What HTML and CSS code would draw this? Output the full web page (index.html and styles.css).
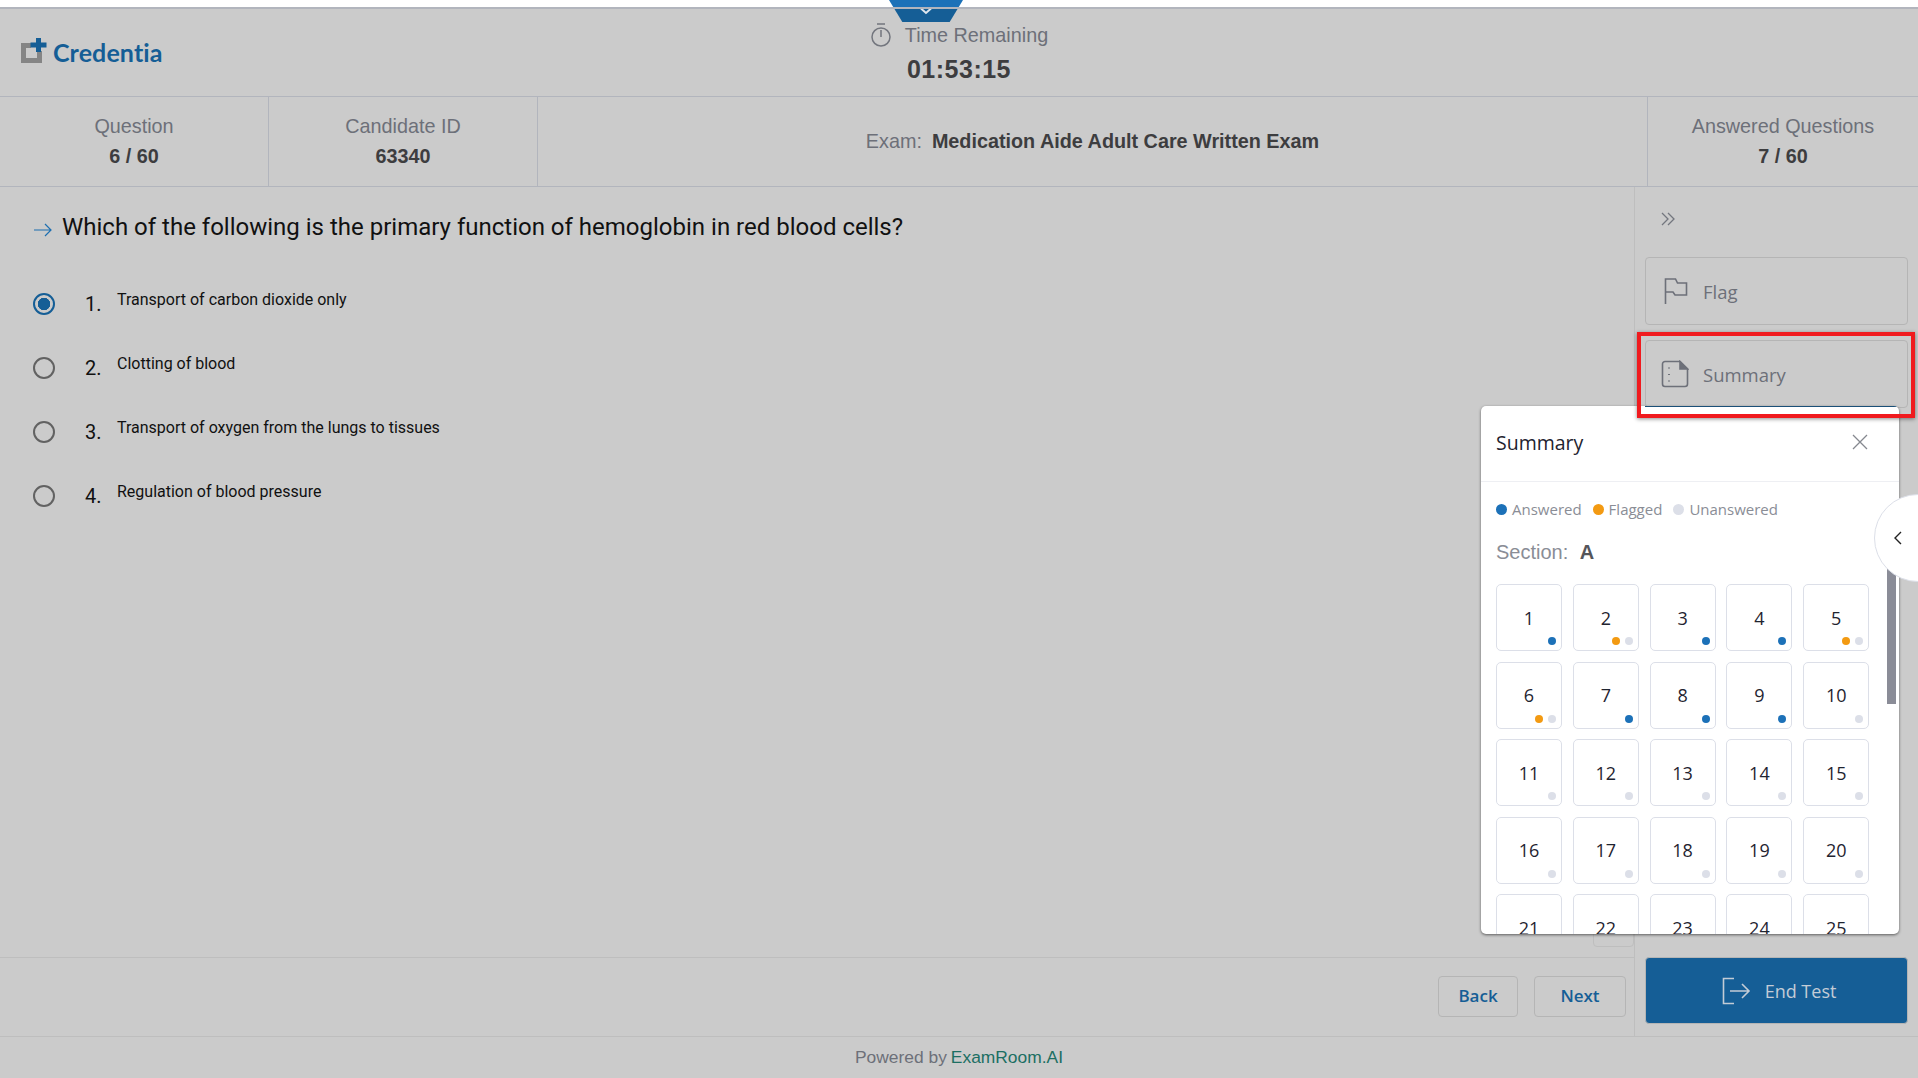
FILE: index.html
```html
<!DOCTYPE html>
<html lang="en">
<head>
  <meta charset="UTF-8" />
  <title>Exam - Credentia</title>
  <link rel="stylesheet" href="styles.css">
</head>
<body>
  <div class="top-strip"></div>
  <div class="drop-tab">
    <svg width="14" height="8" viewBox="0 0 14 8"><path d="M2 1.500 7 6l5-4.500" fill="none" stroke="#dfe6ee" stroke-width="2"/></svg>
  </div>

  <header class="topbar">
    <div class="brand">
      <svg class="brand-mark" width="28" height="27" viewBox="0 0 28 27">
        <path d="M2 5h10v5H7v10h11v-7h5v12H2z" fill="#858585"/>
        <path d="M17 0h5v4.500h5.500v5H22V14h-5V9.500h-5.500v-5H17z" fill="#155e96"/>
      </svg>
      <span class="brand-name">Credentia</span>
    </div>
    <div class="timer">
      <div class="timer-label">
        <svg width="22" height="26" viewBox="0 0 22 26" fill="none" stroke="#73767e" stroke-width="1.500">
          <path d="M7 2h8M11 8v7"/>
          <circle cx="11" cy="15" r="9"/>
        </svg>
        <span>Time Remaining</span>
      </div>
      <div class="timer-value">01:53:15</div>
    </div>
  </header>

  <section class="info-row">
    <div class="info-cell cell-question">
      <span class="info-label">Question</span>
      <strong>6 / 60</strong>
    </div>
    <div class="info-cell cell-candidate">
      <span class="info-label">Candidate ID</span>
      <strong>63340</strong>
    </div>
    <div class="info-exam">
      <span class="info-label">Exam:</span>
      <strong>Medication Aide Adult Care Written Exam</strong>
    </div>
    <div class="info-cell cell-answered">
      <span class="info-label">Answered Questions</span>
      <strong>7 / 60</strong>
    </div>
  </section>

  <div class="workspace">
    <main class="question-pane">
      <div class="question-body">
        <h1 class="question-title">
          <svg width="20" height="14" viewBox="0 0 20 14" fill="none" stroke="#1d6fb0" stroke-width="1.200"><path d="M1 7h17M12 1l6 6-6 6"/></svg>
          <span>Which of the following is the primary function of hemoglobin in red blood cells?</span>
        </h1>
        <div class="option">
          <span class="radio radio-on"></span>
          <span class="option-num">1.</span>
          <span class="option-text">Transport of carbon dioxide only</span>
        </div>
        <div class="option">
          <span class="radio"></span>
          <span class="option-num">2.</span>
          <span class="option-text">Clotting of blood</span>
        </div>
        <div class="option">
          <span class="radio"></span>
          <span class="option-num">3.</span>
          <span class="option-text">Transport of oxygen from the lungs to tissues</span>
        </div>
        <div class="option">
          <span class="radio"></span>
          <span class="option-num">4.</span>
          <span class="option-text">Regulation of blood pressure</span>
        </div>
      </div>
      <div class="nav-row">
        <button class="nav-btn btn-back">Back</button>
        <button class="nav-btn btn-next">Next</button>
      </div>
    </main>

    <aside class="side-pane">
      <svg class="side-toggle" width="16" height="14" viewBox="0 0 16 14" fill="none" stroke="#73767e" stroke-width="1.300"><path d="M2 1l6 6-6 6M8 1l6 6-6 6"/></svg>
      <button class="side-btn btn-flag">
        <svg width="24" height="28" viewBox="0 0 24 28" fill="none" stroke="#6d7079" stroke-width="1.600"><path d="M1.500 27V2h10l2 4h9v12H11l-2-3H1.500"/></svg>
        <span>Flag</span>
      </button>
      <button class="side-btn btn-summary">
        <svg width="28" height="28" viewBox="0 0 28 28" fill="none" stroke="#6d7079" stroke-width="1.600">
          <path d="M4 1.500h15l7.500 7.500v15a2.500 2.500 0 0 1-2.500 2.500H4A2.500 2.500 0 0 1 1.500 24V4A2.500 2.500 0 0 1 4 1.500z"/>
          <path d="M19 1.500l7.500 7.500H19z" fill="#6d7079"/>
          <path d="M8 7.500v1M8 14v1M8 20.500v1" stroke-width="2"/>
        </svg>
        <span>Summary</span>
      </button>
      <div class="side-spacer"></div>
      <button class="end-btn">
        <svg width="30" height="28" viewBox="0 0 30 28" fill="none" stroke="#c3ccd6" stroke-width="1.600"><path d="M13 1.500H2.500v25H13M9 14h19M21 7l7 7-7 7"/></svg>
        <span>End Test</span>
      </button>
    </aside>
  </div>

  <footer class="page-footer">Powered by <a class="footer-link">ExamRoom.AI</a></footer>

  <div class="hidden-tab"></div>

  <section class="summary-panel">
    <div class="panel-head">
      <span class="panel-title">Summary</span>
      <svg width="16" height="16" viewBox="0 0 16 16" fill="none" stroke="#85888f" stroke-width="1.300"><path d="M1 1l14 14M15 1 1 15"/></svg>
    </div>
    <div class="panel-body">
      <div class="legend">
        <span class="legend-item"><i class="dot dot-answered"></i>Answered</span>
        <span class="legend-item"><i class="dot dot-flagged"></i>Flagged</span>
        <span class="legend-item"><i class="dot dot-open"></i>Unanswered</span>
      </div>
      <div class="section-name"><span>Section:</span> <strong>A</strong></div>
      <div class="tile-grid">
        <div class="tile">1<div class="tile-dots"><i class="dot dot-answered"></i></div></div>
        <div class="tile">2<div class="tile-dots"><i class="dot dot-flagged"></i><i class="dot dot-open"></i></div></div>
        <div class="tile">3<div class="tile-dots"><i class="dot dot-answered"></i></div></div>
        <div class="tile">4<div class="tile-dots"><i class="dot dot-answered"></i></div></div>
        <div class="tile">5<div class="tile-dots"><i class="dot dot-flagged"></i><i class="dot dot-open"></i></div></div>
        <div class="tile">6<div class="tile-dots"><i class="dot dot-flagged"></i><i class="dot dot-open"></i></div></div>
        <div class="tile">7<div class="tile-dots"><i class="dot dot-answered"></i></div></div>
        <div class="tile">8<div class="tile-dots"><i class="dot dot-answered"></i></div></div>
        <div class="tile">9<div class="tile-dots"><i class="dot dot-answered"></i></div></div>
        <div class="tile">10<div class="tile-dots"><i class="dot dot-open"></i></div></div>
        <div class="tile">11<div class="tile-dots"><i class="dot dot-open"></i></div></div>
        <div class="tile">12<div class="tile-dots"><i class="dot dot-open"></i></div></div>
        <div class="tile">13<div class="tile-dots"><i class="dot dot-open"></i></div></div>
        <div class="tile">14<div class="tile-dots"><i class="dot dot-open"></i></div></div>
        <div class="tile">15<div class="tile-dots"><i class="dot dot-open"></i></div></div>
        <div class="tile">16<div class="tile-dots"><i class="dot dot-open"></i></div></div>
        <div class="tile">17<div class="tile-dots"><i class="dot dot-open"></i></div></div>
        <div class="tile">18<div class="tile-dots"><i class="dot dot-open"></i></div></div>
        <div class="tile">19<div class="tile-dots"><i class="dot dot-open"></i></div></div>
        <div class="tile">20<div class="tile-dots"><i class="dot dot-open"></i></div></div>
        <div class="tile">21<div class="tile-dots"><i class="dot dot-open"></i></div></div>
        <div class="tile">22<div class="tile-dots"><i class="dot dot-open"></i></div></div>
        <div class="tile">23<div class="tile-dots"><i class="dot dot-open"></i></div></div>
        <div class="tile">24<div class="tile-dots"><i class="dot dot-open"></i></div></div>
        <div class="tile">25<div class="tile-dots"><i class="dot dot-open"></i></div></div>
      </div>
      <div class="panel-scroll"></div>
    </div>
  </section>

  <div class="round-handle">
    <svg width="9" height="14" viewBox="0 0 9 14" fill="none" stroke="#222" stroke-width="1.400"><path d="M8 1 2 7l6 6"/></svg>
  </div>

  <div class="callout"></div>
</body>
</html>
```

FILE: styles.css
```css
* {
  box-sizing: border-box;
}
html, body {
  height: 1078px;
}
body {
  margin: 0;
  position: relative;
  overflow: hidden;
  display: flex;
  flex-direction: column;
  background-color: #cbcbcb;
  font-family: "Liberation Sans", Arial, sans-serif;
  color: #3d3d3f;
}
button {
  font-family: inherit;
  background: none;
  cursor: pointer;
}
.top-strip {
  height: 7px;
  flex: none;
  background-color: #ffffff;
}
.drop-tab {
  position: absolute;
  top: 0;
  left: 889px;
  width: 74px;
  height: 22px;
  padding-top: 7px;
  display: flex;
  justify-content: center;
  background: linear-gradient(#1c71b8 7px, #155e96 7px);
  clip-path: polygon(0 0, 100% 0, 82% 100%, 18% 100%);
}

/* header */
.topbar {
  height: 90px;
  flex: none;
  position: relative;
  display: flex;
  justify-content: center;
  border-top: 2px solid #b2b5bd;
  border-bottom: 1px solid #b2b5bd;
}
.brand {
  position: absolute;
  left: 19px;
  top: 28px;
  display: flex;
  align-items: center;
  gap: 6px;
}
.brand-mark {
  margin-top: -2px;
}
.brand-name {
  font-family: Lato, sans-serif;
  font-size: 25px;
  font-weight: 700;
  letter-spacing: 0.1px;
  color: #155e96;
}
.timer {
  padding-top: 13px;
  text-align: center;
}
.timer-label {
  display: flex;
  align-items: center;
  gap: 13px;
  font-size: 19.800px;
  color: #6d7079;
}
.timer-value {
  margin-top: 7px;
  font-size: 25px;
  font-weight: 700;
  letter-spacing: 0.5px;
  color: #3d3d3f;
}

/* info row */
.info-row {
  height: 90px;
  flex: none;
  display: flex;
  border-bottom: 1px solid #b2b5bd;
}
.info-cell {
  display: flex;
  flex-direction: column;
  align-items: center;
  justify-content: center;
  gap: 7px;
  font-size: 19.800px;
}
.cell-question {
  width: 269px;
  border-right: 1px solid #b2b5bd;
}
.cell-candidate {
  width: 269px;
  border-right: 1px solid #b2b5bd;
}
.cell-answered {
  width: 271px;
  border-left: 1px solid #b2b5bd;
}
.info-label {
  color: #6d7079;
}
.info-exam {
  flex: 1;
  display: flex;
  align-items: center;
  justify-content: center;
  gap: 10px;
  font-size: 19.800px;
}

/* question */
.workspace {
  height: 849px;
  flex: none;
  display: flex;
}
.question-pane {
  width: 1634px;
  display: flex;
  flex-direction: column;
}
.question-body {
  flex: 1;
  padding: 23px 33px 0;
}
.question-title {
  margin: 0 0 41px;
  display: flex;
  align-items: center;
  gap: 9px;
  font-family: Roboto, sans-serif;
  font-size: 24px;
  font-weight: 400;
  line-height: 34px;
  color: #111111;
}
.question-title svg {
  margin-top: 6px;
}
.option {
  height: 64px;
  display: flex;
  align-items: flex-start;
  color: #111111;
}
.radio {
  width: 22px;
  height: 22px;
  flex: none;
  margin-top: 8px;
  border: 2px solid #626262;
  border-radius: 50%;
}
.radio-on {
  border-color: #155e96;
  background: radial-gradient(circle, #155e96 0 6px, transparent 6.500px);
}
.option-num {
  width: 32px;
  margin: 7px 0 0 30px;
  font-family: Roboto, sans-serif;
  font-size: 20px;
}
.option-text {
  margin-top: 3px;
  font-family: Roboto, sans-serif;
  font-size: 16px;
  line-height: 24px;
}
.nav-row {
  height: 79px;
  flex: none;
  display: flex;
  justify-content: flex-end;
  align-items: flex-start;
  gap: 16px;
  padding: 18px 8px 0 0;
  border-top: 1px solid #bebebe;
}
.nav-btn {
  height: 41px;
  padding: 0 0 2px;
  border: 1px solid #b5b5b5;
  border-radius: 4px;
  font-family: "Open Sans", sans-serif;
  font-size: 17px;
  font-weight: 600;
  color: #155e96;
}
.btn-back {
  width: 80px;
}
.btn-next {
  width: 92px;
}

/* right column */
.side-pane {
  flex: 1;
  display: flex;
  flex-direction: column;
  padding: 0 10px 12px;
  border-left: 1px solid #bebebe;
}
.side-toggle {
  flex: none;
  margin: 25px 0 0 15px;
}
.side-btn {
  height: 68px;
  flex: none;
  display: flex;
  align-items: center;
  border: 1px solid #b5b5b5;
  border-radius: 4px;
  font-family: "Open Sans", sans-serif;
  font-size: 18.500px;
  color: #6d7079;
}
.btn-flag {
  margin-top: 31px;
  gap: 15px;
  padding: 0 0 0 18px;
}
.btn-summary {
  margin-top: 15px;
  gap: 14px;
  padding: 0 0 0 15px;
}
.side-spacer {
  flex: 1;
}
.end-btn {
  height: 67px;
  flex: none;
  display: flex;
  align-items: center;
  justify-content: center;
  gap: 14px;
  padding: 0 0 0 4px;
  border: 1px solid #b5b5b5;
  border-radius: 4px;
  background-color: #155e96;
  font-family: "Open Sans", sans-serif;
  font-size: 18px;
  color: #c3ccd6;
}

/* footer */
.page-footer {
  flex: 1;
  display: flex;
  align-items: center;
  justify-content: center;
  gap: 4px;
  border-top: 1px solid #bebebe;
  font-size: 17.400px;
  color: #6d7079;
}
.footer-link {
  color: #1c6f63;
}

/* summary popup */
.hidden-tab {
  position: absolute;
  left: 1593px;
  top: 925px;
  width: 41px;
  height: 22px;
  border: 1px solid #bebebe;
  border-radius: 0 0 4px 4px;
}
.summary-panel {
  position: absolute;
  left: 1481px;
  top: 406px;
  width: 418px;
  height: 528px;
  display: flex;
  flex-direction: column;
  overflow: hidden;
  border-radius: 5px;
  background-color: #ffffff;
  box-shadow: 0 1px 3px rgba(0, 0, 0, 0.55);
}
.summary-panel::before {
  content: "";
  position: absolute;
  top: 0;
  left: 164px;
  right: 0;
  height: 1px;
  background-color: #1a4f78;
}
.panel-head {
  height: 76px;
  flex: none;
  display: flex;
  align-items: center;
  justify-content: space-between;
  padding: 0 31px 3px 15px;
  border-bottom: 1px solid #eeeff3;
}
.panel-title {
  font-family: "Open Sans", sans-serif;
  font-size: 19.500px;
  color: #1f2430;
}
.panel-body {
  flex: 1;
  position: relative;
  overflow: hidden;
  padding: 0 29px 0 15px;
}
.legend {
  display: flex;
  gap: 11px;
  margin-top: 17px;
  font-family: "Open Sans", sans-serif;
  font-size: 15px;
  line-height: 20px;
  color: #8a8d96;
}
.legend-item {
  display: flex;
  align-items: center;
  gap: 5px;
}
.dot {
  display: block;
  width: 11px;
  height: 11px;
  border-radius: 50%;
}
.dot-answered {
  background-color: #1c71b8;
}
.dot-flagged {
  background-color: #f39a12;
}
.dot-open {
  background-color: #dcdfe8;
}
.section-name {
  margin-top: 19px;
  font-size: 20px;
  line-height: 28px;
  color: #8a8d96;
}
.section-name strong {
  margin-left: 6px;
  color: #55565a;
}
.tile-grid {
  margin-top: 18px;
  display: grid;
  grid-template-columns: repeat(5, 66px);
  grid-auto-rows: 67px;
  gap: 10.500px 10.800px;
}
.tile {
  position: relative;
  display: flex;
  align-items: center;
  justify-content: center;
  border: 1px solid #dcdfe8;
  border-radius: 5px;
  font-family: "Open Sans", sans-serif;
  font-size: 18px;
  color: #1f2430;
}
.tile-dots {
  position: absolute;
  right: 5px;
  bottom: 5px;
  display: flex;
  gap: 5px;
}
.tile-dots .dot {
  width: 8px;
  height: 8px;
}
.panel-scroll {
  position: absolute;
  right: 3px;
  top: 59px;
  width: 9px;
  height: 163px;
  background-color: #8a8c97;
}
.round-handle {
  position: absolute;
  left: 1874px;
  top: 494px;
  width: 88px;
  height: 88px;
  display: flex;
  align-items: center;
  padding-left: 18px;
  border: 1px solid #dcdfe8;
  border-radius: 50%;
  background-color: #ffffff;
}
.callout {
  position: absolute;
  left: 1637px;
  top: 332px;
  width: 278px;
  height: 86px;
  border: 4px solid #f01a1e;
  box-shadow: 0 1px 4px rgba(0, 0, 0, 0.45);
}
```
